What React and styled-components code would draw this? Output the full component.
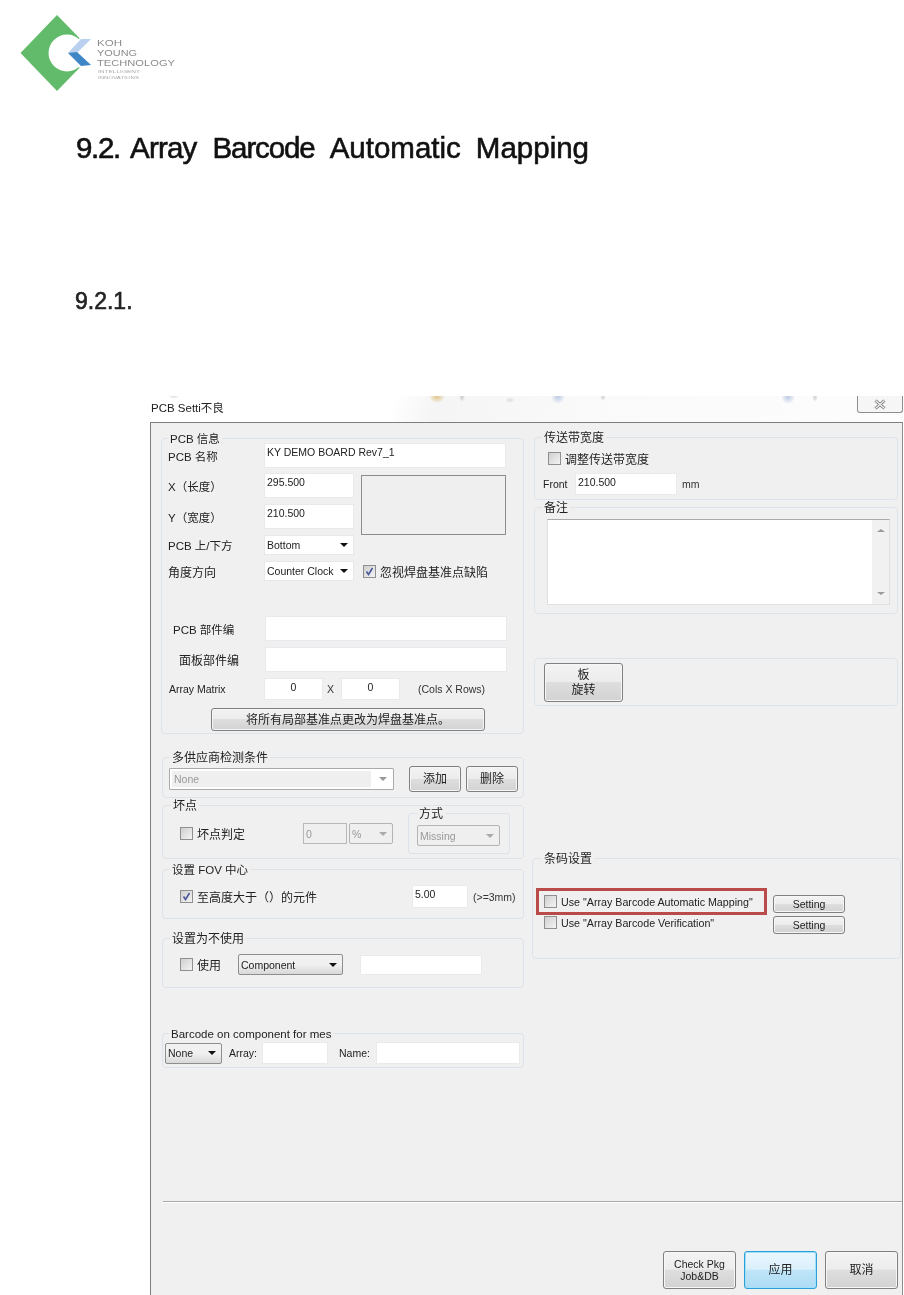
import React from 'react';
import styled, { createGlobalStyle } from 'styled-components';

const Global = createGlobalStyle`
  html, body { margin: 0; padding: 0; background: #fff; }
  body { width: 904px; height: 1295px; overflow: hidden; font-family: "Liberation Sans", "Noto Sans CJK SC", sans-serif; }
`;
const Page = styled.div`
  width: 904px; height: 1295px; overflow: hidden; display: flex; flex-direction: column; background: #fff;
`;
const LogoWrap = styled.div`height: 95px; padding: 0; box-sizing: border-box; filter: blur(0.7px);`;
const H1 = styled.h1`
  margin: 36px 0 0 76px; display: flex; font: 400 29.5px/34px "Liberation Sans", "Noto Sans CJK SC", sans-serif; color: #111; -webkit-text-stroke: 0.6px #111; filter: blur(0.4px); white-space: pre;
`;
const Word = styled.span`letter-spacing: ${p => p.$ls || 0}px; margin-right: ${p => p.$mr}px;`;
const H2 = styled.h2`
  margin: 123px 0 0 75px; font: 400 23px/26px "Liberation Sans", sans-serif; color: #222; -webkit-text-stroke: 0.6px #222; filter: blur(0.4px);
`;
const Dialog = styled.div`
  margin: 82px 0 0 150px; width: 754px; flex: 1; display: flex; flex-direction: column; color: #222; font-size: 10.5px; filter: blur(0.25px);
`;
const TitleBar = styled.div`
  height: 26px; flex: none; position: relative; box-sizing: border-box; padding: 5px 0 0 1px; font-size: 11.5px; line-height: 14px; color: #222;
  background:
    radial-gradient(ellipse 8px 6px at 287px 1px, #dfc58a, transparent),
    radial-gradient(ellipse 3px 5px at 312px 1px, #c9c9c9, transparent),
    radial-gradient(ellipse 5px 3px at 360px 4px, #ddd, transparent),
    radial-gradient(ellipse 7px 7px at 408px 1px, #bccbe4, transparent),
    radial-gradient(ellipse 3px 4px at 453px 1px, #d0d0d0, transparent),
    radial-gradient(ellipse 7px 7px at 638px 1px, #bccbe4, transparent),
    radial-gradient(ellipse 3px 5px at 665px 1px, #cfcfcf, transparent),
    radial-gradient(ellipse 6px 3px at 24px 0px, #dcdcdc, transparent),
    linear-gradient(105deg, #fff 32%, #f5f5f5 38%, #fafafa 60%, #fdfdfd 100%);
`;
const CloseBtn = styled.div`
  position: absolute; right: 1px; top: 0; width: 46px; height: 17px; box-sizing: border-box; border: 1px solid #8d8d8d; border-top: 0; border-radius: 0 0 3px 3px; background: #f6f6f6; display: flex; align-items: center; justify-content: center;
`;
const Body = styled.div`
  flex: 1; position: relative; background: #f0f0f0; border: 1px solid #7d7d7d; border-bottom: 0; border-right-color: #8d8d8d; margin-right: 1px; box-sizing: border-box; padding: 15px 4px 0 10px; display: flex; flex-direction: column;
`;
const Columns = styled.div`
  display: grid; grid-template-columns: 363px 364px; column-gap: 10px; height: 763px; flex: none;
`;
const Col = styled.div`display: flex; flex-direction: column; min-width: 0;`;
const Group = styled.section`
  position: relative; box-sizing: border-box; height: ${p => p.$h}px; margin-top: ${p => p.$mt || 0}px; margin-left: ${p => p.$ml || 0}px; margin-right: ${p => p.$mr || 0}px;
  border: 1px solid #dce3ea; border-radius: 4px; flex: none;
`;
const Legend = styled.span`
  position: absolute; left: ${p => p.$x || 8}px; top: -7px; background: #f0f0f0; padding: 0 2px; font-size: ${p => p.$fs || 12}px; line-height: 14px; color: #222; white-space: nowrap;
`;
const Row = styled.div`
  display: flex; align-items: center; margin-top: ${p => p.$mt || 0}px; padding-left: ${p => p.$pl || 0}px; white-space: nowrap;
`;
const Label = styled.span`
  width: ${p => p.$w ? p.$w + 'px' : 'auto'}; margin-left: ${p => p.$ml || 0}px; flex: none; font-size: ${p => p.$fs || 12}px; color: ${p => p.$c || '#222'};
`;
const Input = styled.div`
  box-sizing: border-box; width: ${p => p.$w}px; height: ${p => p.$h}px; margin-left: ${p => p.$ml || 0}px; flex: none; background: #fff; border: 1px solid #e8eaed; padding: ${p => p.$center ? '2px 0 0' : '2px 2px 0'}; text-align: ${p => p.$center ? 'center' : 'left'}; font-size: 10.5px; line-height: 13px;
`;
const DisabledInput = styled(Input)`
  background: #efefef; border-color: #b8b8b8; color: #999; padding-top: 4px;
`;
const Preview = styled.div`
  box-sizing: border-box; width: 145px; height: 60px; margin-left: 7px; margin-top: 2px; border: 1px solid #8c8c8c; background: #efefef; flex: none;
`;
const XYGrid = styled.div`display: grid; grid-template-columns: 1fr; row-gap: 6px;`;
const XYWrap = styled.div`display: flex; align-items: flex-start; margin-top: 5px; padding-left: 6px;`;
const Select = styled.div`
  box-sizing: border-box; width: ${p => p.$w}px; height: ${p => p.$h || 20}px; margin-left: ${p => p.$ml || 0}px; flex: none; display: flex; align-items: center; justify-content: space-between; padding: 0 5px 0 2px; font-size: 10.5px; background: #fff; border: 1px solid #e8e8e8;
  ${p => p.$button && `background: linear-gradient(#f2f2f2, #f0f0f0 50%, #d8d8d8); border: 1px solid #8e8e8e; border-radius: 2px;`}
  ${p => p.$disabled && `background: #efefef; border: 1px solid #b4b4b4; border-radius: 2px; color: #999;`}
  ${p => p.$sunken && `background: #fff; border: 1px solid #aaa; border-radius: 1px; color: #999; padding: 2px 6px 2px 2px;`}
`;
const Arrow = styled.i`
  width: 0; height: 0; border-left: 4px solid transparent; border-right: 4px solid transparent; border-top: 4px solid ${p => p.$c || '#111'}; flex: none;
`;
const Fill = styled.span`flex: 1; background: #efefef; align-self: stretch; margin-right: 8px; display: flex; align-items: center; padding-left: 2px;`;
const Box = styled.span`
  box-sizing: border-box; width: 13px; height: 13px; flex: none; display: inline-flex; align-items: center; justify-content: center; border: 1px solid #8f8f8f; background: linear-gradient(135deg, #cfcfcf, #f4f4f4); margin-right: 4px;
`;
const Check = ({ on }) => (
  <Box>{on && <svg width="9" height="9" viewBox="0 0 9 9"><path d="M1.5 4.5 L3.5 7.5 L7.5 1" fill="none" stroke="#4a5a9a" strokeWidth="1.6" /></svg>}</Box>
);
const Button = styled.div`
  box-sizing: border-box; width: ${p => p.$w}px; height: ${p => p.$h}px; margin-left: ${p => p.$ml || 0}px; flex: none; display: flex; flex-direction: column; align-items: center; justify-content: center; text-align: center; line-height: ${p => p.$lh || 12}px; font-size: ${p => p.$fs || 12}px; color: #222; border: 1px solid #808080; border-radius: 3px; box-shadow: inset 0 0 0 1px #f6f6f6; white-space: nowrap;
  background: linear-gradient(#f3f3f3 0, #ececec 48%, #dedede 50%, #d2d2d2 100%);
`;
const ApplyButton = styled(Button)`
  border-color: #2b9fd8; box-shadow: inset 0 0 0 1px #9fe0fa; background: linear-gradient(#eaf7fe 0, #daf0fc 48%, #bfe5f8 50%, #aedcf4 100%);
`;
const Scroll = styled.div`
  box-sizing: border-box; width: 343px; height: 86px; margin: 11px 0 0 12px; background: #fff; border: 1px solid #e0e0e0; border-top-color: #aaa; display: flex; justify-content: flex-end;
`;
const ScrollTrack = styled.div`
  width: 17px; background: #f1f1f1; display: flex; flex-direction: column; justify-content: space-between; align-items: center; padding: 9px 0 9px; box-sizing: border-box;
`;
const ArrowUp = styled.i`width: 0; height: 0; border-left: 4px solid transparent; border-right: 4px solid transparent; border-bottom: 3px solid #999;`;
const ArrowDown = styled.i`width: 0; height: 0; border-left: 4px solid transparent; border-right: 4px solid transparent; border-top: 3px solid #999;`;
const Highlight = styled.div`
  position: absolute; left: 3px; top: 29px; width: 231px; height: 27px; box-sizing: border-box; border: 3px solid #b94c4a;
`;
const BarcodeRows = styled.div`display: flex; padding: 36px 0 0 11px;`;
const BarcodeLabels = styled.div`width: 229px; flex: none; display: flex; flex-direction: column; gap: 8px;`;
const BarcodeText = styled.span`font-size: 10.7px;`;
const BarcodeButtons = styled.div`display: flex; flex-direction: column; gap: 3px;`;
const Separator = styled.div`
  height: 1px; background: #a8a8a8; margin: 0 -4px 0 2px; box-shadow: 0 1px 0 #fff; flex: none;
`;
const Footer = styled.div`
  display: flex; gap: 8px; padding: 49px 0 0 502px;
`;
const SubGroup = styled.div`
  position: relative; box-sizing: border-box; width: 102px; height: 41px; margin-left: 15px; border: 1px solid #dce3ea; border-radius: 3px; padding: 11px 0 0 8px; flex: none;
`;
const Unit = styled.span`margin-left: ${p => p.$ml}px; font-size: ${p => p.$fs || 10.5}px; color: #333;`;

function Logo() {
  return (
    <svg width="190" height="95" viewBox="0 0 190 95">
      <path d="M20.5 53 L57 15 L94 53 L57 91 Z" fill="#62bb6a" />
      <circle cx="67" cy="53" r="18.5" fill="#fff" />
      <path d="M79 38 L96 50 L96 56 L79 68 Z" fill="#fff" />
      <path d="M68 53 L81 39 L91 39 L77 53 Z" fill="#b9d1ee" />
      <path d="M68 53 L77 52 L91 65 L81 66 Z" fill="#3f86c6" />
      <g fontFamily="Liberation Sans, sans-serif" fill="#8c8c8c">
        <text x="97" y="46" fontSize="9" textLength="25" lengthAdjust="spacingAndGlyphs">KOH</text>
        <text x="97" y="56" fontSize="9" textLength="40" lengthAdjust="spacingAndGlyphs">YOUNG</text>
        <text x="97" y="66" fontSize="9" textLength="78" lengthAdjust="spacingAndGlyphs">TECHNOLOGY</text>
        <text x="98" y="73" fontSize="4" textLength="42" lengthAdjust="spacingAndGlyphs" fill="#aaa">INTELLIGENT</text>
        <text x="98" y="79" fontSize="4" textLength="41" lengthAdjust="spacingAndGlyphs" fill="#aaa">INNOVATIONS</text>
      </g>
    </svg>
  );
}

export default function App() {
  return (
    <Page>
      <Global />
      <LogoWrap><Logo /></LogoWrap>
      <H1>
        <Word $ls={-1.3} $mr={10}>9.2.</Word>
        <Word $ls={-0.8} $mr={16}>Array</Word>
        <Word $ls={-1.1} $mr={15}>Barcode</Word>
        <Word $mr={15}>Automatic</Word>
        <Word $mr={0}>Mapping</Word>
      </H1>
      <H2>9.2.1.</H2>
      <Dialog>
        <TitleBar>PCB Setti不良
          <CloseBtn>
            <svg width="14" height="11" viewBox="0 0 14 11">
              <path d="M2.5 1.5 L11.5 9.5 M11.5 1.5 L2.5 9.5" stroke="#666" strokeWidth="3" fill="none" />
              <path d="M2.5 1.5 L11.5 9.5 M11.5 1.5 L2.5 9.5" stroke="#f6f6f6" strokeWidth="1.4" fill="none" />
            </svg>
          </CloseBtn>
        </TitleBar>
        <Body>
          <Columns>
            <Col>
              <Group $h={296}>
                <Legend $x={6} $fs={11.5}>PCB 信息</Legend>
                <Row $mt={4} $pl={6}><Label $w={96} $fs={11.5}>PCB 名称</Label><Input $w={242} $h={25}>KY DEMO BOARD Rev7_1</Input></Row>
                <XYWrap>
                  <XYGrid>
                    <Row><Label $w={96} $fs={11.5}>X（长度）</Label><Input $w={90} $h={25}>295.500</Input></Row>
                    <Row><Label $w={96} $fs={11.5}>Y（宽度）</Label><Input $w={90} $h={25}>210.500</Input></Row>
                  </XYGrid>
                  <Preview />
                </XYWrap>
                <Row $pl={6}><Label $w={96} $fs={11.5}>PCB 上/下方</Label><Select $w={90}>Bottom<Arrow /></Select></Row>
                <Row $mt={6} $pl={6}><Label $w={96}>角度方向</Label><Select $w={90}>Counter Clock<Arrow /></Select>
                  <Label $ml={9}><Row><Check on />忽视焊盘基准点缺陷</Row></Label></Row>
                <Row $mt={35} $pl={11}><Label $w={92} $fs={11.5}>PCB 部件编</Label><Input $w={242} $h={25} /></Row>
                <Row $mt={6} $pl={17}><Label $w={86}>面板部件编</Label><Input $w={242} $h={25} /></Row>
                <Row $mt={6} $pl={7}><Label $w={95} $fs={10.5}>Array Matrix</Label><Input $w={59} $h={22} $center>0</Input><Unit $ml={4}>X</Unit><Input $w={59} $h={22} $ml={7} $center>0</Input><Unit $ml={18}>(Cols X Rows)</Unit></Row>
                <Row $mt={8} $pl={49}><Button $w={274} $h={23}>将所有局部基准点更改为焊盘基准点。</Button></Row>
              </Group>
              <Group $h={41} $mt={23} $ml={1}>
                <Legend $x={7}>多供应商检测条件</Legend>
                <Row $mt={8} $pl={6}>
                  <Select $w={225} $h={22} $sunken><Fill>None</Fill><Arrow $c="#999" /></Select>
                  <Button $w={52} $h={26} $ml={15}>添加</Button><Button $w={52} $h={26} $ml={5}>删除</Button>
                </Row>
              </Group>
              <Group $h={54} $mt={7} $ml={1}>
                <Legend $x={8}>坏点</Legend>
                <Row $mt={7} $pl={17}>
                  <Check /><Label $w={106}>坏点判定</Label>
                  <DisabledInput $w={44} $h={21}>0</DisabledInput>
                  <Select $w={44} $h={21} $ml={2} $disabled>%<Arrow $c="#aaa" /></Select>
                  <SubGroup><Legend $x={8}>方式</Legend><Select $w={83} $h={21} $disabled>Missing<Arrow $c="#aaa" /></Select></SubGroup>
                </Row>
              </Group>
              <Group $h={50} $mt={10} $ml={1}>
                <Legend $x={7} $fs={11.5}>设置 FOV 中心</Legend>
                <Row $mt={15} $pl={17}>
                  <Check on /><Label $w={215}>至高度大于（）的元件</Label>
                  <Input $w={56} $h={23}>5.00</Input><Unit $ml={5}>(&gt;=3mm)</Unit>
                </Row>
              </Group>
              <Group $h={50} $mt={19} $ml={1}>
                <Legend $x={7}>设置为不使用</Legend>
                <Row $mt={15} $pl={17}>
                  <Check /><Label $w={41}>使用</Label>
                  <Select $w={105} $h={21} $button>Component<Arrow /></Select>
                  <Input $w={122} $h={20} $ml={17} />
                </Row>
              </Group>
              <Group $h={35} $mt={45} $ml={1}>
                <Legend $x={6} $fs={11.5}>Barcode on component for mes</Legend>
                <Row $mt={8} $pl={2}>
                  <Select $w={57} $h={21} $button>None<Arrow /></Select>
                  <Label $ml={7} $w={33} $fs={10.5}>Array:</Label><Input $w={66} $h={22} />
                  <Label $ml={11} $w={37} $fs={10.5}>Name:</Label><Input $w={144} $h={22} />
                </Row>
              </Group>
            </Col>
            <Col>
              <Group $h={63} $mt={-1}>
                <Legend $x={7}>传送带宽度</Legend>
                <Row $mt={12} $pl={13}><Check /><Label>调整传送带宽度</Label></Row>
                <Row $mt={6} $pl={8}><Label $w={32} $fs={10.5}>Front</Label><Input $w={102} $h={22}>210.500</Input><Unit $ml={5}>mm</Unit></Row>
              </Group>
              <Group $h={107} $mt={7}>
                <Legend $x={7}>备注</Legend>
                <Scroll><ScrollTrack><ArrowUp /><ArrowDown /></ScrollTrack></Scroll>
              </Group>
              <Group $h={48} $mt={44}>
                <Row $mt={4} $pl={9}><Button $w={79} $h={39} $lh={15}><span>板</span><span>旋转</span></Button></Row>
              </Group>
              <Group $h={101} $mt={152} $ml={-2} $mr={-3}>
                <Legend $x={9}>条码设置</Legend>
                <Highlight />
                <BarcodeRows>
                  <BarcodeLabels>
                    <Row><Check /><BarcodeText>Use "Array Barcode Automatic Mapping"</BarcodeText></Row>
                    <Row><Check /><BarcodeText>Use "Array Barcode Verification"</BarcodeText></Row>
                  </BarcodeLabels>
                  <BarcodeButtons>
                    <Button $w={72} $h={18} $fs={10.5}>Setting</Button>
                    <Button $w={72} $h={18} $fs={10.5}>Setting</Button>
                  </BarcodeButtons>
                </BarcodeRows>
              </Group>
            </Col>
          </Columns>
          <Separator />
          <Footer>
            <Button $w={73} $h={38} $fs={10.5}><span>Check Pkg</span><span>Job&amp;DB</span></Button>
            <ApplyButton $w={73} $h={38}>应用</ApplyButton>
            <Button $w={73} $h={38}>取消</Button>
          </Footer>
        </Body>
      </Dialog>
    </Page>
  );
}
